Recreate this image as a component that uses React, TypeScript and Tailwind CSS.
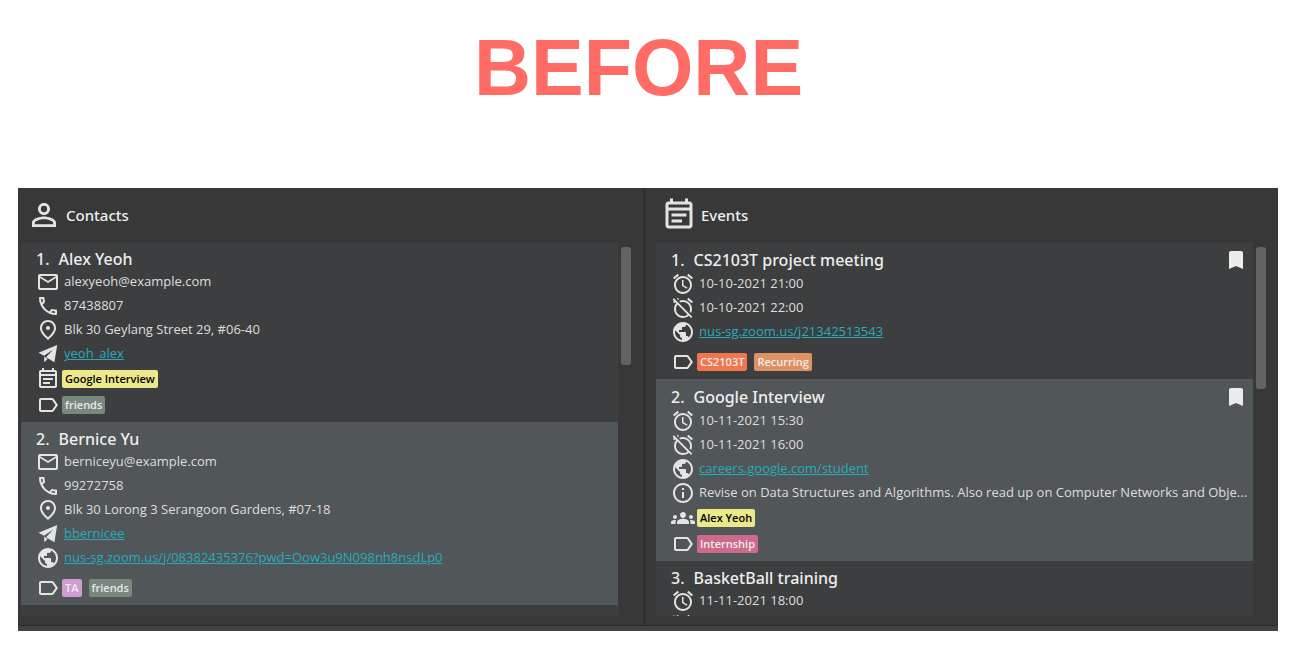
import React from 'react';
import type { IconType } from 'react-icons';
import {
  MdAlarm,
  MdAlarmOff,
  MdBookmark,
  MdGroups,
  MdLabelOutline,
  MdOutlineEventNote,
  MdOutlineInfo,
  MdOutlineMail,
  MdOutlinePhone,
  MdOutlinePlace,
  MdPersonOutline,
  MdPublic,
} from 'react-icons/md';

type Chip = { label: string; color: string };
type Detail = {
  icon: IconType;
  text?: string;
  href?: string;
  chips?: Chip[];
  spaced?: boolean;
};
type Entry = { title: string; bookmarked?: boolean; details: Detail[] };

const yellow = 'bg-[#ebe98a] text-black';
const sage = 'bg-[#78887e] text-[#e8e8e8]';

const PlaneIcon: IconType = () => (
  <svg viewBox="0 0 24 24" fill="currentColor" className="size-6 shrink-0 text-[#e4e4e4]" aria-hidden="true">
    <path d="M21.2 3 2.5 10.8l5.6 2.9L17.2 7.6 10 15.2l8.4 5z" />
    <path d="M8.2 14.6v5.6l3.4-3.2z" />
  </svg>
);

const contacts: Entry[] = [
  {
    title: 'Alex Yeoh',
    details: [
      { icon: MdOutlineMail, text: 'alexyeoh@example.com' },
      { icon: MdOutlinePhone, text: '87438807' },
      { icon: MdOutlinePlace, text: 'Blk 30 Geylang Street 29, #06-40' },
      { icon: PlaneIcon, text: 'yeoh_alex', href: '#yeoh_alex' },
      { icon: MdOutlineEventNote, chips: [{ label: 'Google Interview', color: yellow }] },
      { icon: MdLabelOutline, chips: [{ label: 'friends', color: sage }] },
    ],
  },
  {
    title: 'Bernice Yu',
    details: [
      { icon: MdOutlineMail, text: 'berniceyu@example.com' },
      { icon: MdOutlinePhone, text: '99272758' },
      { icon: MdOutlinePlace, text: 'Blk 30 Lorong 3 Serangoon Gardens, #07-18' },
      { icon: PlaneIcon, text: 'bbernicee', href: '#bbernicee' },
      { icon: MdPublic, text: 'nus-sg.zoom.us/j/08382435376?pwd=Oow3u9N098nh8nsdLp0', href: '#zoom' },
      {
        icon: MdLabelOutline,
        spaced: true,
        chips: [
          { label: 'TA', color: 'bg-[#d19bd3] text-[#eeeeee]' },
          { label: 'friends', color: sage },
        ],
      },
    ],
  },
];

const events: Entry[] = [
  {
    title: 'CS2103T project meeting',
    bookmarked: true,
    details: [
      { icon: MdAlarm, text: '10-10-2021 21:00' },
      { icon: MdAlarmOff, text: '10-10-2021 22:00' },
      { icon: MdPublic, text: 'nus-sg.zoom.us/j21342513543', href: '#meeting' },
      {
        icon: MdLabelOutline,
        spaced: true,
        chips: [
          { label: 'CS2103T', color: 'bg-[#f0764d] text-[#eeeeee]' },
          { label: 'Recurring', color: 'bg-[#df9164] text-[#eeeeee]' },
        ],
      },
    ],
  },
  {
    title: 'Google Interview',
    bookmarked: true,
    details: [
      { icon: MdAlarm, text: '10-11-2021 15:30' },
      { icon: MdAlarmOff, text: '10-11-2021 16:00' },
      { icon: MdPublic, text: 'careers.google.com/student', href: '#careers' },
      {
        icon: MdOutlineInfo,
        text: 'Revise on Data Structures and Algorithms. Also read up on Computer Networks and Obje...',
      },
      { icon: MdGroups, chips: [{ label: 'Alex Yeoh', color: yellow }] },
      { icon: MdLabelOutline, chips: [{ label: 'Internship', color: 'bg-[#cd6a8b] text-[#eeeeee]' }] },
    ],
  },
  {
    title: 'BasketBall training',
    details: [{ icon: MdAlarm, text: '11-11-2021 18:00' }, { icon: MdAlarmOff }],
  },
];

function DetailRow({ icon: Icon, text, href, chips, spaced }: Detail) {
  return (
    <li className={`flex items-center ${chips ? 'h-[26px] gap-[2px]' : 'h-6 gap-1'} ${spaced ? 'mt-[5px]' : ''}`}>
      <Icon className="size-6 shrink-0 text-[#e4e4e4]" />
      {text &&
        (href ? (
          <a href={href} className="truncate text-[#28abbb] underline">
            {text}
          </a>
        ) : (
          <span className="whitespace-nowrap">{text}</span>
        ))}
      {chips && (
        <span className="flex gap-[7px]">
          {chips.map((c) => (
            <span key={c.label} className={`h-[18px] rounded-[2px] px-[3px] text-[11px] leading-[18px] font-semibold ${c.color}`}>
              {c.label}
            </span>
          ))}
        </span>
      )}
    </li>
  );
}

function Panel({ icon: Icon, name, entries, thumb }: { icon: IconType; name: string; entries: Entry[]; thumb: string }) {
  return (
    <section className="min-w-0 flex-1">
      <header className="flex h-[54px] items-center gap-1 pl-[5px] text-[#eeeeee]">
        <Icon className="size-9 text-[#e4e4e4]" />
        <h2 className="font-['Noto_Sans',sans-serif] text-[15px] leading-5 font-medium">{name}</h2>
      </header>
      <div className="flex h-[374px] gap-[3px]">
        <ol className="min-w-0 flex-1 overflow-hidden bg-[#3c3e3f]">
          {entries.map((e, i) => (
            <li key={e.title} className="pt-[6px] pr-[5px] pb-1 pl-[15px] even:bg-[#515658]">
              <div className={`flex items-center justify-between ${e.bookmarked ? 'h-6' : 'h-[22px]'}`}>
                <h3 className="flex gap-[9px] font-['Noto_Sans',sans-serif] text-[16px] font-medium text-[#eeeeee]">
                  <span>{i + 1}.</span>
                  <span>{e.title}</span>
                </h3>
                {e.bookmarked && <MdBookmark className="size-6 text-[#ececec]" />}
              </div>
              <ul>
                {e.details.map((d, k) => (
                  <DetailRow key={k} {...d} />
                ))}
              </ul>
            </li>
          ))}
        </ol>
        <div className={`mt-[5px] w-[10px] rounded-[3px] bg-[#636363] ${thumb}`} />
      </div>
    </section>
  );
}

export default function App() {
  return (
    <main className="bg-white pr-[17px] pl-[18px] font-['Open_Sans','Noto_Sans',sans-serif]">
      <h1 className="flex h-[188px] items-start justify-center pt-[22px] pr-[19px] font-['Liberation_Sans',Arial,sans-serif] text-[79px] leading-[92px] font-bold text-[#ff6c66]">
        BEFORE
      </h1>
      <div className="bg-[#383838] text-[13px] text-[#dedede]">
        <div className="flex pr-3 pb-[9px] pl-[3px]">
          <Panel icon={MdPersonOutline} name="Contacts" entries={contacts} thumb="h-[118px]" />
          <div className="mr-[10px] -mb-[9px] ml-3 w-[3px] border-x border-[#323232] bg-[#2e2e2e]" />
          <Panel icon={MdOutlineEventNote} name="Events" entries={events} thumb="h-[142px]" />
        </div>
        <div className="h-[6px] border-t border-[#2c2c2c] bg-[#434343]" />
      </div>
    </main>
  );
}
